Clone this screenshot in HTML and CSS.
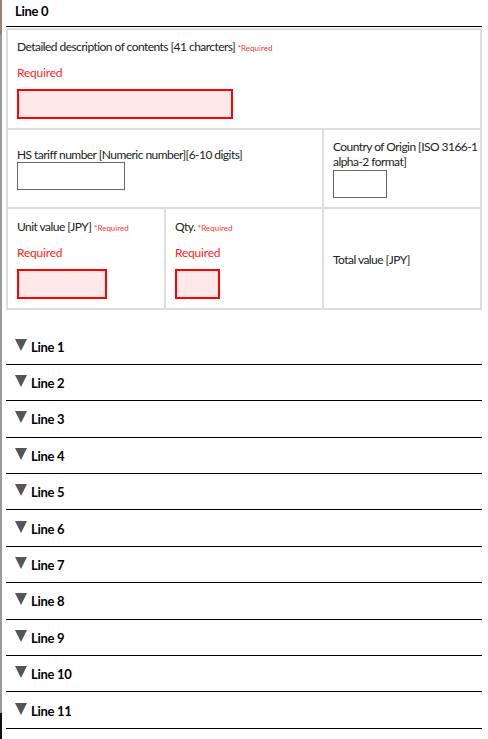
FILE: index.html
```html
<!DOCTYPE html>
<html>
<head>
<meta charset="utf-8">
<link rel="stylesheet" href="styles.css">
</head>
<body>
<div class="page">
  <section class="line-open">
    <div class="line-head">Line 0</div>
    <table class="form-table">
      <tr>
        <td colspan="3" class="cell">
          <div class="label">Detailed description of contents [41 charcters] <span class="req">*Required</span></div>
          <div class="err">Required</div>
          <div class="input input-err w-desc"></div>
        </td>
      </tr>
      <tr>
        <td colspan="2" class="cell cell-mid">
          <div class="label">HS tariff number [Numeric number][6-10 digits]</div>
          <div class="input w-hs"></div>
        </td>
        <td class="cell cell-mid cell-co">
          <div class="label">Country of Origin [ISO 3166-1 alpha-2 format]</div>
          <div class="input w-co"></div>
        </td>
      </tr>
      <tr class="row3">
        <td class="cell c1">
          <div class="label">Unit value [JPY] <span class="req">*Required</span></div>
          <div class="err">Required</div>
          <div class="input input-err w-unit"></div>
        </td>
        <td class="cell c2">
          <div class="label">Qty. <span class="req">*Required</span></div>
          <div class="err">Required</div>
          <div class="input input-err w-qty"></div>
        </td>
        <td class="cell c3 cell-mid">
          <div class="label">Total value [JPY]</div>
        </td>
      </tr>
    </table>
  </section>
  <div class="lines">
    <div class="line"><span class="tri"></span>Line 1</div>
    <div class="line"><span class="tri"></span>Line 2</div>
    <div class="line"><span class="tri"></span>Line 3</div>
    <div class="line"><span class="tri"></span>Line 4</div>
    <div class="line"><span class="tri"></span>Line 5</div>
    <div class="line"><span class="tri"></span>Line 6</div>
    <div class="line"><span class="tri"></span>Line 7</div>
    <div class="line"><span class="tri"></span>Line 8</div>
    <div class="line"><span class="tri"></span>Line 9</div>
    <div class="line"><span class="tri"></span>Line 10</div>
    <div class="line"><span class="tri"></span>Line 11</div>
  </div>
</div>
</body>
</html>
```
FILE: styles.css
```css
html, body {
  margin: 0;
  padding: 0;
  background: #fff;
}
body {
  font-family: Lato, "Open Sans", sans-serif;
  color: #222;
  border-left: 2px solid #999;
  border-image: linear-gradient(to bottom, #9c8274 0, #9c8274 36px, #999 36px, #999 712px, #111 712px) 1;
  min-height: 739px;
  box-sizing: border-box;
}
.page {
  padding: 0 4px 0 4px;
  width: 476px;
}
.line-head {
  font-weight: bold;
  font-size: 13px;
  color: #000;
  padding: 3px 9px 0;
  height: 23px;
  border-bottom: 1px solid #000;
  letter-spacing: -0.3px;
}
.form-table {
  width: 476px;
  border-collapse: separate;
  border-spacing: 0;
  border: 1px solid #ddd;
  margin-top: 1px;
  table-layout: fixed;
}
.cell {
  border: 1px solid #ddd;
  padding: 9px 9px 9px;
  vertical-align: top;
  font-size: 12px;
  letter-spacing: -0.55px;
}
.cell-mid {
  vertical-align: middle;
}
.cell-co {
  padding-right: 2px;
}
.row3 .cell {
  padding-top: 10px;
}
.c1, .c2 { width: 138px; }
.label {
  line-height: 15px;
}
.req {
  color: #f33;
  font-size: 8px;
  line-height: 1;
  letter-spacing: 0;
}
.err {
  color: #f22;
  font-size: 12px;
  margin-top: 11px;
  line-height: 16px;
  letter-spacing: -0.2px;
}
.input {
  height: 26px;
  border: 1px solid #666;
  background: #fff;
}
.input-err {
  border: 2px solid #f00;
  background: #ffe8e8;
  margin-top: 8px;
}
.w-desc { width: 212px; }
.w-hs { width: 106px; }
.w-co { width: 52px; margin-top: 1px; }
.w-unit { width: 86px; }
.w-qty { width: 41px; }
.lines {
  margin-top: 18.5px;
}
.line {
  border-bottom: 1px solid #000;
  font-weight: bold;
  font-size: 13px;
  color: #000;
  display: flex;
  align-items: center;
  padding-left: 9px;
  padding-top: 1px;
  box-sizing: border-box;
  height: 36.4px;
  letter-spacing: -0.3px;
}
.tri {
  width: 0;
  height: 0;
  border-left: 6px solid transparent;
  border-right: 6px solid transparent;
  border-top: 12px solid #555;
  margin-right: 4px;
  margin-top: -4px;
}
```
